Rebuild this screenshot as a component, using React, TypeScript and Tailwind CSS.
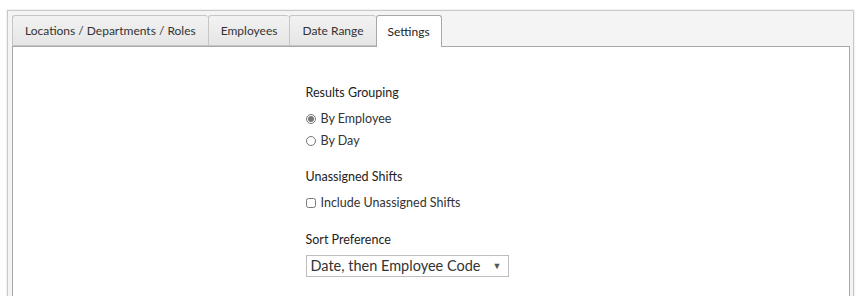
import React from "react";

const tabs = ["Locations / Departments / Roles", "Employees", "Date Range", "Settings"];

export default function App() {
  return (
    <div className="w-[866px] h-[296px] overflow-hidden bg-white pl-[7px] pt-[10px] text-[12px] leading-[18px] text-[#333]" style={{ fontFamily: "Lato, 'Liberation Sans', sans-serif" }}>
      <div className="w-[847px] h-[300px] border border-[#c8c8c8] bg-[#f4f4f4] shadow-[0_0_2px_rgba(0,0,0,0.15)] pl-[4px] pr-[3px] pt-[3px]">
        {/* tab strip */}
        <div className="flex h-[32px] items-end">
          {tabs.map((t, i) => {
            const active = i === tabs.length - 1;
            return (
              <div
                key={t}
                className={
                  active
                    ? "relative z-10 -mb-px flex h-[32px] items-center rounded-t-[3px] border border-b-0 border-[#a8a8a8] bg-white px-[11px] text-[#222]"
                    : "flex h-[31px] items-center rounded-t-[3px] border border-[#c6c6c6] border-r-0 bg-gradient-to-b from-[#f2f2f2] to-[#e6e6e6] px-[12px] text-[#333]"
                }
              >
                {t}
              </div>
            );
          })}
        </div>
        {/* panel */}
        <div className="h-[260px] border border-[#a8a8a8] bg-white flex justify-center text-[12.5px]">
          <div className="w-[251px] pt-[37px]">
            <div className="text-[#222]">Results Grouping</div>
            <label className="mt-[8px] flex items-center gap-[5px]">
              <input type="radio" name="grp" defaultChecked className="m-0 h-[10px] w-[10px] accent-[#777]" />
              <span>By Employee</span>
            </label>
            <label className="mt-[4px] flex items-center gap-[5px]">
              <input type="radio" name="grp" className="m-0 h-[10px] w-[10px]" />
              <span>By Day</span>
            </label>

            <div className="mt-[18px] text-[#222]">Unassigned Shifts</div>
            <label className="mt-[8px] flex items-center gap-[5px]">
              <input type="checkbox" className="m-0 h-[10px] w-[10px]" />
              <span>Include Unassigned Shifts</span>
            </label>

            <div className="mt-[19px] text-[#222]">Sort Preference</div>
            <div className="mt-[6px] flex h-[22px] w-[203px] items-center justify-between border border-[#bdbdbd] bg-white pl-[4px] pr-[6px] text-[14.5px] text-[#333]">
              <span>Date, then Employee Code</span>
              <span className="text-[9px] text-[#555]">▼</span>
            </div>
          </div>
        </div>
      </div>
    </div>
  );
}
